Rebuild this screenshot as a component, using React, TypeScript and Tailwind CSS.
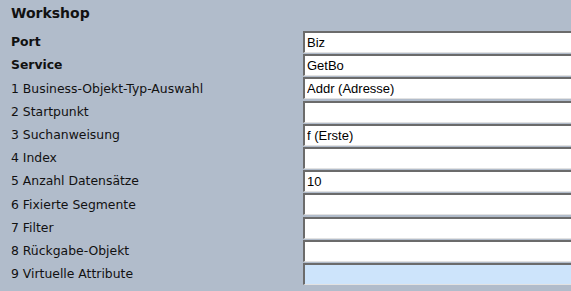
import React from "react";

const rows: { label: string; value: string; bold?: boolean; active?: boolean }[] = [
    { label: "Port", value: "Biz", bold: true },
    { label: "Service", value: "GetBo", bold: true },
    { label: "1 Business-Objekt-Typ-Auswahl", value: "Addr (Adresse)" },
    { label: "2 Startpunkt", value: "" },
    { label: "3 Suchanweisung", value: "f (Erste)" },
    { label: "4 Index", value: "" },
    { label: "5 Anzahl Datensätze", value: "10" },
    { label: "6 Fixierte Segmente", value: "" },
    { label: "7 Filter", value: "" },
    { label: "8 Rückgabe-Objekt", value: "" },
    { label: "9 Virtuelle Attribute", value: "", active: true },
];

export default function App() {
    return (
        <div className="h-[291px] w-[571px] overflow-hidden bg-[#b1bccb] font-['DejaVu_Sans',sans-serif] text-[#111]">
            <h1 className="h-[31px] pl-[11px] pt-[3px] text-[14px] font-bold leading-[20px]">Workshop</h1>

            <div className="grid grid-cols-[303px_1fr] auto-rows-[23.2px]">
                {rows.map((row) => (
                    <React.Fragment key={row.label}>
                        <div className={"flex items-center pl-[11px] text-[12.4px] " + (row.bold ? "font-bold" : "")}>
                            {row.label}
                        </div>
                        <div className="flex items-start">
                            <input
                                readOnly
                                value={row.value}
                                className={
                                    "h-[22px] w-[300px] border-t-2 border-l-2 border-b border-r border-t-[#6b6b6b] border-l-[#6b6b6b] border-b-[#e2e2e2] border-r-[#e2e2e2] pl-[2px] font-['Liberation_Sans',sans-serif] text-[13px] text-black outline-none " +
                                    (row.active ? "bg-[#cde4fb]" : "bg-white")
                                }
                            />
                        </div>
                    </React.Fragment>
                ))}
            </div>
        </div>
    );
}
